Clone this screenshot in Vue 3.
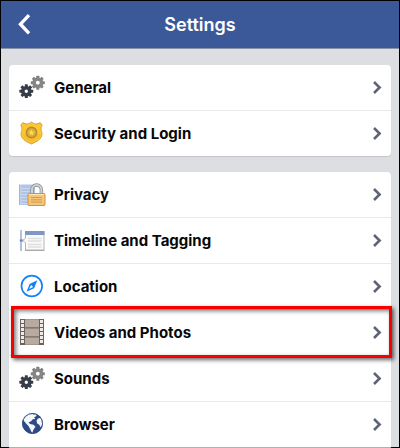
<script setup>
const groups = [
  [
    { label: 'General', icon: 'gears' },
    { label: 'Security and Login', icon: 'badge' },
  ],
  [
    { label: 'Privacy', icon: 'lock' },
    { label: 'Timeline and Tagging', icon: 'timeline' },
    { label: 'Location', icon: 'compass' },
    { label: 'Videos and Photos', icon: 'film', marked: true },
    { label: 'Sounds', icon: 'gears' },
    { label: 'Browser', icon: 'globe' },
  ],
]
const teeth = [0, 45, 90, 135, 180, 225, 270, 315]
const holes = [2, 6, 10, 14, 18, 22]
</script>

<template>
  <div class="screen">
    <header class="bar">
      <button class="back" type="button" aria-label="Back">
        <svg width="14" height="22" viewBox="0 0 14 22" fill="none">
          <path d="M12 1.2 3.5 10.2 12 19.4" stroke="#fff" stroke-width="3.4" />
        </svg>
      </button>
      <h1>Settings</h1>
    </header>
    <main>
      <nav v-for="(group, g) in groups" :key="g" class="card">
        <a v-for="item in group" :key="item.label" href="#" class="row" :class="{ marked: item.marked }">
          <svg class="icon" width="28" height="28" viewBox="0 0 28 28" fill="none">
            <g v-if="item.icon === 'gears'">
              <g transform="translate(8.3 17.2)">
                <rect v-for="a in teeth" :key="a" x="-1.5" y="-6.9" width="3" height="4" rx=".5" :transform="`rotate(${a})`" fill="#363c48" />
                <circle r="3.5" stroke="#363c48" stroke-width="3.6" />
              </g>
              <g transform="translate(19.8 8.7)">
                <rect v-for="a in teeth" :key="a" x="-1.5" y="-7" width="3" height="4" rx=".5" :transform="`rotate(${a})`" fill="#808080" />
                <circle r="3.7" stroke="#858585" stroke-width="3.6" />
              </g>
            </g>
            <g v-else-if="item.icon === 'badge'">
              <path d="M13.5 2C11 4 8 4.8 4.8 2.6L2.8 5.2C5 8 3.4 10.7 3 13.5 2.7 18.5 7.5 21.4 13.5 24 19.5 21.4 24.3 18.5 24 13.5 23.6 10.7 22 8 24.2 5.2L22.2 2.6C19 4.8 16 4 13.5 2Z" fill="#fbc833" stroke="#d5a037" />
              <path d="M4.5 14C5 18 9 20.4 13.5 22.5 18 20.4 22 18 22.5 14Z" fill="#f5b52a" opacity=".65" />
              <circle cx="13.5" cy="12.5" r="5.1" fill="#deb03a" stroke="#b78c2e" stroke-width="1.6" />
              <path d="m13.5 9.5.8 2 2.1.2-1.6 1.4.5 2.1-1.8-1.1-1.8 1.1.5-2.1-1.6-1.4 2.1-.2Z" fill="#ffe052" />
            </g>
            <g v-else-if="item.icon === 'lock'">
              <path d="M1 3.5H17V24H1Z" fill="#b2c4e5" />
              <path d="M2.8 4V24M3 7.5H15M3 10.5H15M3 13.5H12M3 16.5H10M3 19.5H10M3 22.5H10" stroke="#c8d6ee" />
              <path d="M1.5 4V24" stroke="#9fb4d9" />
              <path d="M14 14V8.8a4.7 4.7 0 0 1 9.4 0V14" stroke="#8b8b8b" stroke-width="3.5" />
              <path d="M14 14V8.8a4.7 4.7 0 0 1 9.4 0V14" stroke="#d2d2d2" stroke-width="2" />
              <rect x="10" y="12.5" width="17" height="12" rx="1" fill="#f5c578" stroke="#d78f3c" />
              <path d="M11 13.5H26" stroke="#ffe5b2" />
              <path d="M13 16.5H24M13 18.8H24M13 21.1H24" stroke="#cf9b55" />
            </g>
            <g v-else-if="item.icon === 'timeline'">
              <path d="M3 3V24" stroke="#a0b2d5" stroke-width="1.6" />
              <path d="M1.8 13.5H5.5" stroke="#6682b6" stroke-width="2" />
              <path d="M7.5 4.5H26V23H7.5V16L5 13.5 7.5 11Z" fill="#fafafa" stroke="#b5b5b5" />
              <path d="M7 4H26.5V8H7Z" fill="#7f97c6" />
              <path d="M10 11.5H23.5M10 14H23.5M10 17.5H23.5M10 20H23.5" stroke="#dedede" stroke-width="1.6" />
              <path d="M7 23.5H26.5" stroke="#aaa" />
            </g>
            <g v-else-if="item.icon === 'compass'">
              <circle cx="13.8" cy="13" r="10.3" stroke="#1680f7" stroke-width="1.7" />
              <path d="M19.3 7.3 16.1 15.3 8.5 18.7 11.6 10.9Z" fill="#1680f7" />
              <path d="m13.1 12 2.1 2.1-4.2 1.9Z" fill="#fff" />
            </g>
            <g v-else-if="item.icon === 'film'">
              <rect x="2" width="24" height="26" fill="#6b625e" />
              <path d="M7 0H21V26H7Z" fill="#b8aaa1" />
              <path d="M6.5 8.8H21.5M6.5 17.8H21.5" stroke="#74675f" stroke-width="1.3" />
              <path d="M7 .5H21M7 25.5H21" stroke="#a3958d" />
              <template v-for="y in holes" :key="y">
                <rect x="3" :y="y - 1" width="3" height="3" fill="#eeeae7" />
                <rect x="22" :y="y - 1" width="3" height="3" fill="#eeeae7" />
              </template>
            </g>
            <g v-else>
              <circle cx="14.5" cy="12.5" r="10.3" fill="#2c4a85" />
              <path d="M5 8.5C6.5 5 9 2.8 13 2.3L15.5 3.4 18 3 18.5 5 16.2 6.2 17.2 8 14.8 8.3 12.8 10.4 10.5 11.2 12 13 15.5 13.8 17.5 15.8 15.7 18.3 14.3 21.8C12.8 20.5 12.6 18 11.2 16.5 10.7 14.5 8.5 13.2 7.2 11.5Z" fill="#f4f7fb" />
              <path d="M20 7.6 22.8 6.7 24.5 10.5 24.6 14 22.7 16.2 21.2 13.8 19 12.2 18.5 9.5Z" fill="#f4f7fb" />
              <circle cx="14.5" cy="12.5" r="10" stroke="#2c4a85" stroke-width="1" />
            </g>
          </svg>
          <span class="label">{{ item.label }}</span>
          <svg class="chevron" width="10" height="14" viewBox="0 0 10 14" fill="none">
            <path d="M2 1 7.6 6.5 2 12" stroke="#5e6474" stroke-width="2.6" />
          </svg>
        </a>
      </nav>
    </main>
  </div>
</template>

<style>
body {
  margin: 0;
}
</style>

<style scoped>
.screen {
  box-sizing: border-box;
  min-height: 100vh;
  border: 1px solid #000;
  background: #dddee2;
  font-family: Inter, "Liberation Sans", sans-serif;
  color: #080808;
}
.bar {
  display: grid;
  grid-template-columns: 48px 1fr 48px;
  align-items: center;
  height: 47px;
  background: #3b5998;
  border-bottom: 1px solid #8a92a5;
}
.back {
  display: flex;
  align-items: center;
  height: 44px;
  padding: 0 0 0 16px;
  border: 0;
  background: none;
}
h1 {
  margin: 0;
  text-align: center;
  font-size: 18px;
  font-weight: 600;
  line-height: 24px;
  color: #fff;
}
main {
  display: flex;
  flex-direction: column;
  gap: 16px;
  padding: 16px 8px 0;
}
.card {
  background: #fff;
  border-radius: 4px;
  box-shadow: 0 1px 1px #c4c5ca;
}
.card:last-child {
  border-radius: 4px 4px 0 0;
}
.row {
  position: relative;
  display: flex;
  align-items: center;
  height: 45px;
  padding: 0 9px;
  color: inherit;
  text-decoration: none;
}
.row + .row {
  border-top: 1px solid #e9e9eb;
}
.icon {
  flex: none;
}
.label {
  flex: 1;
  padding-left: 8px;
  font-size: 15px;
  font-weight: 700;
  line-height: 20px;
}
.marked::after {
  content: "";
  position: absolute;
  z-index: 1;
  inset: -4px -1px -3px 2px;
  border: 3px solid #f80000;
  box-shadow: 2px 2px 4px #0009, inset 2px 2px 4px #0008;
  pointer-events: none;
}
</style>
